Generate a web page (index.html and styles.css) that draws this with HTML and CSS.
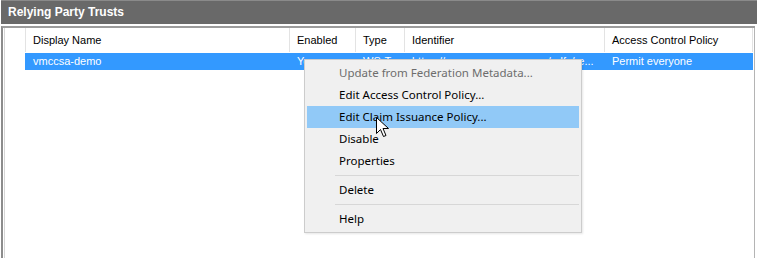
FILE: index.html
```html
<!DOCTYPE html>
<html lang="en">
<head>
    <meta charset="UTF-8">
    <title>Relying Party Trusts</title>
    <link rel="stylesheet" href="styles.css">
</head>
<body>
    <div class="window">
        <div class="titlebar">Relying Party Trusts</div>
        <div class="pane">
            <div class="list">
                <div class="row head">
                    <div class="gutter"></div>
                    <div class="cell">Display Name</div>
                    <div class="cell">Enabled</div>
                    <div class="cell">Type</div>
                    <div class="cell">Identifier</div>
                    <div class="cell">Access Control Policy</div>
                </div>
                <div class="row selected">
                    <div class="gutter"></div>
                    <div class="cell">vmccsa-demo</div>
                    <div class="cell">Yes</div>
                    <div class="cell">WS-T...</div>
                    <div class="cell">https://vmccsa.vmware.com/adfs/re...</div>
                    <div class="cell">Permit everyone</div>
                </div>
            </div>
        </div>

        <!-- context menu over the selected row -->
        <div class="menu">
            <div class="item disabled">Update from Federation Metadata...</div>
            <div class="item">Edit Access Control Policy...</div>
            <div class="item hover">Edit Claim Issuance Policy...</div>
            <div class="item">Disable</div>
            <div class="item">Properties</div>
            <div class="sep"></div>
            <div class="item">Delete</div>
            <div class="sep"></div>
            <div class="item">Help</div>
        </div>

        <svg class="cursor" width="13" height="21" viewBox="0 0 13 21">
            <path d="M0.5 0.5 L0.5 16.5 L4.5 12.5 L7.5 19.5 L10 18.5 L7 11.5 L12.5 11.5 Z" fill="#fff" stroke="#000" stroke-width="1" stroke-linejoin="miter"/>
        </svg>
    </div>
</body>
</html>
```

FILE: styles.css
```css
body {
    margin: 0;
    background-color: white;
    font-family: "Liberation Sans", Arial, sans-serif;
    font-size: 11px;
    color: black;
}
.window {
    position: relative;
    width: 757px;
    height: 258px;
    overflow: hidden;
}
.titlebar {
    margin-left: 1px;
    height: 23px;
    line-height: 22px;
    padding-left: 7px;
    border-top: 1px solid #8a8a8a;
    background-color: #696969;
    color: white;
    font-weight: bold;
    font-size: 12px;
}
.pane {
    margin-left: 1px;
    margin-right: 2px;
    margin-top: 2px;
    height: 240px;
    border-top: 2px solid #9c9c9c;
    border-left: 2px solid #8c8c8c;
}
.list {
    height: 100%;
    margin-left: 1px;
    border-right: 1px solid #b4b4b4;
    border-left: 1px solid #d6d6d6;
}
.row {
    display: grid;
    grid-template-columns: 20px 264px 66px 49px 200px 149px;
}
.head {
    height: 24px;
    line-height: 24px;
}
.head .cell {
    border-left: 1px solid #e3e3e3;
}
.head .cell:last-child {
    border-right: 1px solid #e3e3e3;
}
.cell {
    padding-left: 7px;
    white-space: nowrap;
    overflow: hidden;
    text-overflow: ellipsis;
}
.selected {
    height: 17px;
    line-height: 17px;
    margin-top: 1px;
}
.selected .cell {
    background-color: #3399ff;
    color: white;
    border-left: 1px solid #3399ff;
}
.menu {
    position: absolute;
    left: 304px;
    top: 59px;
    width: 272px;
    padding: 2px;
    border: 1px solid #cccccc;
    background-color: #f0f0f0;
    font-family: "Noto Sans", sans-serif;
    font-size: 11.5px;
    box-shadow: 1px 1px 2px rgba(0, 0, 0, 0.1);
}
.item {
    height: 22px;
    line-height: 22px;
    padding-left: 32px;
    color: #000;
}
.item.disabled {
    color: #6d6d6d;
}
.item.hover {
    background-color: #91c9f7;
}
.sep {
    height: 1px;
    margin: 3px 0 3px 28px;
    background-color: #d7d7d7;
}
.cursor {
    position: absolute;
    left: 376px;
    top: 117px;
}
```
